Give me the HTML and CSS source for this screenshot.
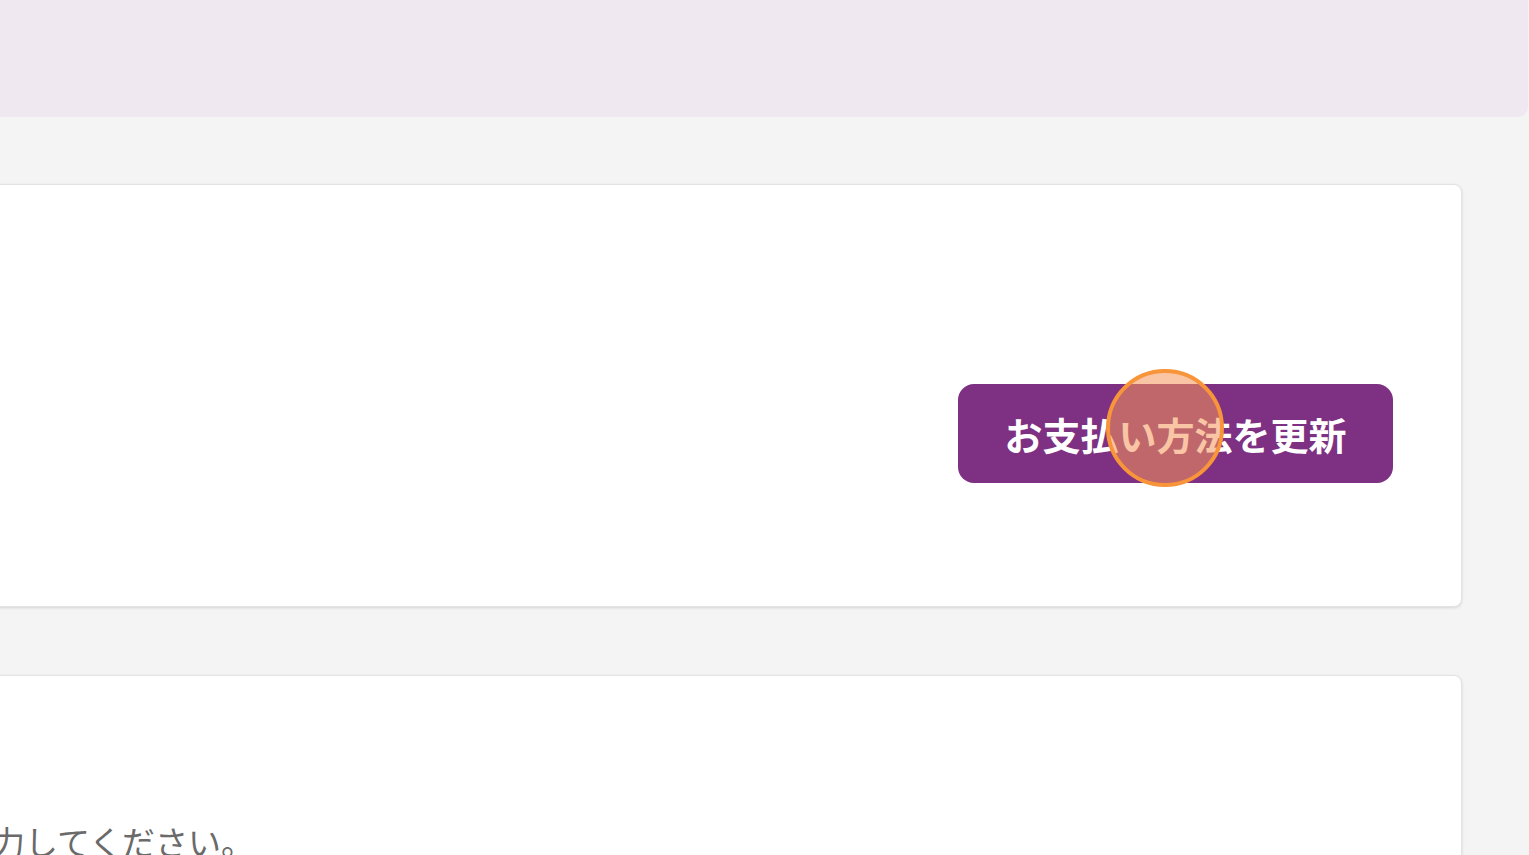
FILE: index.html
```html
<!DOCTYPE html>
<html lang="ja">
<head>
<meta charset="utf-8">
<title>お支払い方法</title>
<link rel="stylesheet" href="styles.css">
</head>
<body>
<header class="topbar"></header>
<main class="main">
  <section class="card card-payment">
    <button class="btn-update" type="button">お支払い方法を更新<span class="click-marker"></span></button>
  </section>
  <section class="card card-form">
    <p class="hint">を入力してください。</p>
  </section>
</main>
</body>
</html>
```
FILE: styles.css
```css
html, body {
  margin: 0;
  padding: 0;
}
body {
  background: #f4f4f4;
  font-family: "Noto Sans CJK JP", "Noto Sans", sans-serif;
  width: 1529px;
  height: 855px;
  overflow: hidden;
}
.topbar {
  width: 1528px;
  height: 117px;
  background: #efe8f0;
  border-bottom-right-radius: 10px;
}
.main {
  padding: 67px 67px 0 0;
  display: flex;
  flex-direction: column;
  gap: 68px;
}
.card {
  margin-left: -40px;
  background: #ffffff;
  border: 1px solid #e3e3e3;
  border-radius: 8px;
  box-shadow: 0 1px 3px rgba(0, 0, 0, 0.12);
  box-sizing: border-box;
}
.card-payment {
  height: 423px;
  display: flex;
  justify-content: flex-end;
  align-items: flex-start;
  padding: 199px 68px 0 0;
}
.btn-update {
  position: relative;
  width: 435px;
  height: 99px;
  border: none;
  border-radius: 16px;
  background: #7e3082;
  color: #ffffff;
  font-family: "Noto Sans CJK JP", sans-serif;
  font-weight: 700;
  font-size: 38px;
  padding: 0;
  letter-spacing: 0;
  cursor: pointer;
}
.click-marker {
  position: absolute;
  left: 148px;
  top: -15px;
  width: 118px;
  height: 118px;
  box-sizing: border-box;
  border: 4px solid #f8943a;
  border-radius: 50%;
  background: rgba(244, 150, 90, 0.55);
}
.card-form {
  height: 300px;
  padding: 142px 0 0 0;
}
.hint {
  margin: 0 0 0 -35px;
  font-size: 33px;
  color: #6a6a6a;
  line-height: 1.4;
}
```
